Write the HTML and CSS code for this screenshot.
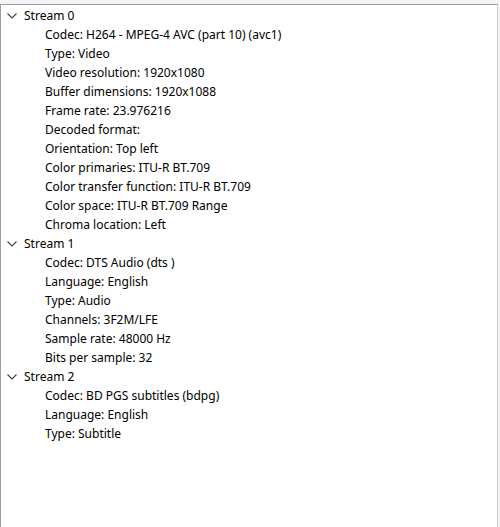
FILE: index.html
```html
<!DOCTYPE html>
<html>
	<head>
		<meta charset="UTF-8" />
		<title>Streams</title>
		<link rel="stylesheet" href="styles.css">
	</head>
	<body>
		<div class="tree">
			<div class="node">
				<div class="row parent"><svg class="chev" width="10" height="6" viewBox="0 0 10 6"><polyline points="0.5,0.5 5,5 9.5,0.5" /></svg>Stream 0</div>
				<div class="row child">Codec: H264 - MPEG-4 AVC (part 10) (avc1)</div>
				<div class="row child">Type: Video</div>
				<div class="row child">Video resolution: 1920x1080</div>
				<div class="row child">Buffer dimensions: 1920x1088</div>
				<div class="row child">Frame rate: 23.976216</div>
				<div class="row child">Decoded format: </div>
				<div class="row child">Orientation: Top left</div>
				<div class="row child">Color primaries: ITU-R BT.709</div>
				<div class="row child">Color transfer function: ITU-R BT.709</div>
				<div class="row child">Color space: ITU-R BT.709 Range</div>
				<div class="row child">Chroma location: Left</div>
			</div>
			<div class="node">
				<div class="row parent"><svg class="chev" width="10" height="6" viewBox="0 0 10 6"><polyline points="0.5,0.5 5,5 9.5,0.5" /></svg>Stream 1</div>
				<div class="row child">Codec: DTS Audio (dts )</div>
				<div class="row child">Language: English</div>
				<div class="row child">Type: Audio</div>
				<div class="row child">Channels: 3F2M/LFE</div>
				<div class="row child">Sample rate: 48000 Hz</div>
				<div class="row child">Bits per sample: 32</div>
			</div>
			<div class="node">
				<div class="row parent"><svg class="chev" width="10" height="6" viewBox="0 0 10 6"><polyline points="0.5,0.5 5,5 9.5,0.5" /></svg>Stream 2</div>
				<div class="row child">Codec: BD PGS subtitles (bdpg)</div>
				<div class="row child">Language: English</div>
				<div class="row child">Type: Subtitle</div>
			</div>
		</div>
	</body>
</html>
```

FILE: styles.css
```css
html, body {
	margin: 0px; padding: 0px;
	width: 100%; height: 100%;
	background: #f5f4f4;
	overflow: hidden;
}

body {
	font-family: "Noto Sans", "Open Sans", sans-serif;
	font-size: 12px;
	color: #000;
}

.tree {
	box-sizing: border-box;
	width: 498px;
	height: 523px;
	margin-top: 4px;
	background: #fff;
	border-top: 1px solid #9c9ca8;
	border-left: 1px solid #9c9ca8;
	border-right: 1px solid #d0d0d4;
	padding-top: 1px;
}

.row {
	height: 19px;
	line-height: 19px;
	white-space: nowrap;
}

.parent {
	display: flex;
	align-items: center;
	padding-left: 6px;
}

.chev {
	margin-right: 7px;
	margin-top: 1px;
	fill: none;
	stroke: #404040;
	stroke-width: 1.1;
}

.child { padding-left: 44px }
```
